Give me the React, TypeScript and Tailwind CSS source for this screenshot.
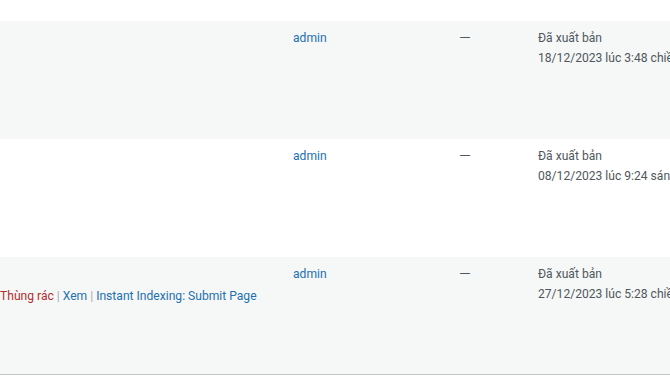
import React from "react"

type Row = {
  date: string
  actions?: boolean
}

const rows: Row[] = [
  { date: "18/12/2023 lúc 3:48 chiều" },
  { date: "08/12/2023 lúc 9:24 sáng" },
  { date: "27/12/2023 lúc 5:28 chiều", actions: true },
]

function RowActions() {
  return (
    <div className="pt-[2px] whitespace-nowrap">
      <span className="text-[#b32d2e]">Thùng rác</span>
      <span className="text-[#a7aaad]"> | </span>
      <span className="text-[#2271b1]">Xem</span>
      <span className="text-[#a7aaad]"> | </span>
      <span className="text-[#2271b1]">Instant Indexing: Submit Page</span>
    </div>
  )
}

export default function App() {
  return (
    <div
      className="w-[670px] h-[377px] overflow-hidden bg-white text-[12.1px] leading-[19.5px] text-[#50575e]"
      style={{ fontFamily: 'Roboto, "Noto Sans", sans-serif' }}
    >
      {/* tail of previous row */}
      <div className="h-[21px] bg-white" />

      {rows.map((row, i) => (
        <div
          key={i}
          className={
            "flex h-[118px] " +
            (i % 2 === 0 ? "bg-[#f6f7f7]" : "bg-white") +
            (i === rows.length - 1 ? " h-[117px] border-b border-[#c3c4c7]" : "")
          }
        >
          {/* Title */}
          <div className="w-[283px] shrink-0 pt-[8px]">
            <div className="h-[20px]" />
            {row.actions && <RowActions />}
          </div>

          {/* Author */}
          <div className="w-[166px] shrink-0 px-[10px] pt-[8px]">
            <span className="text-[#2271b1]">admin</span>
          </div>

          {/* Tags */}
          <div className="w-[79px] shrink-0 px-[10px] pt-[8px]">
            <span className="inline-block w-[12px] scale-x-[1.25] origin-left">—</span>
          </div>

          {/* Date */}
          <div className="flex-1 min-w-0 pl-[10px] pt-[8px] whitespace-nowrap overflow-hidden">
            <div>Đã xuất bản</div>
            <div>{row.date}</div>
          </div>
        </div>
      ))}
    </div>
  )
}
